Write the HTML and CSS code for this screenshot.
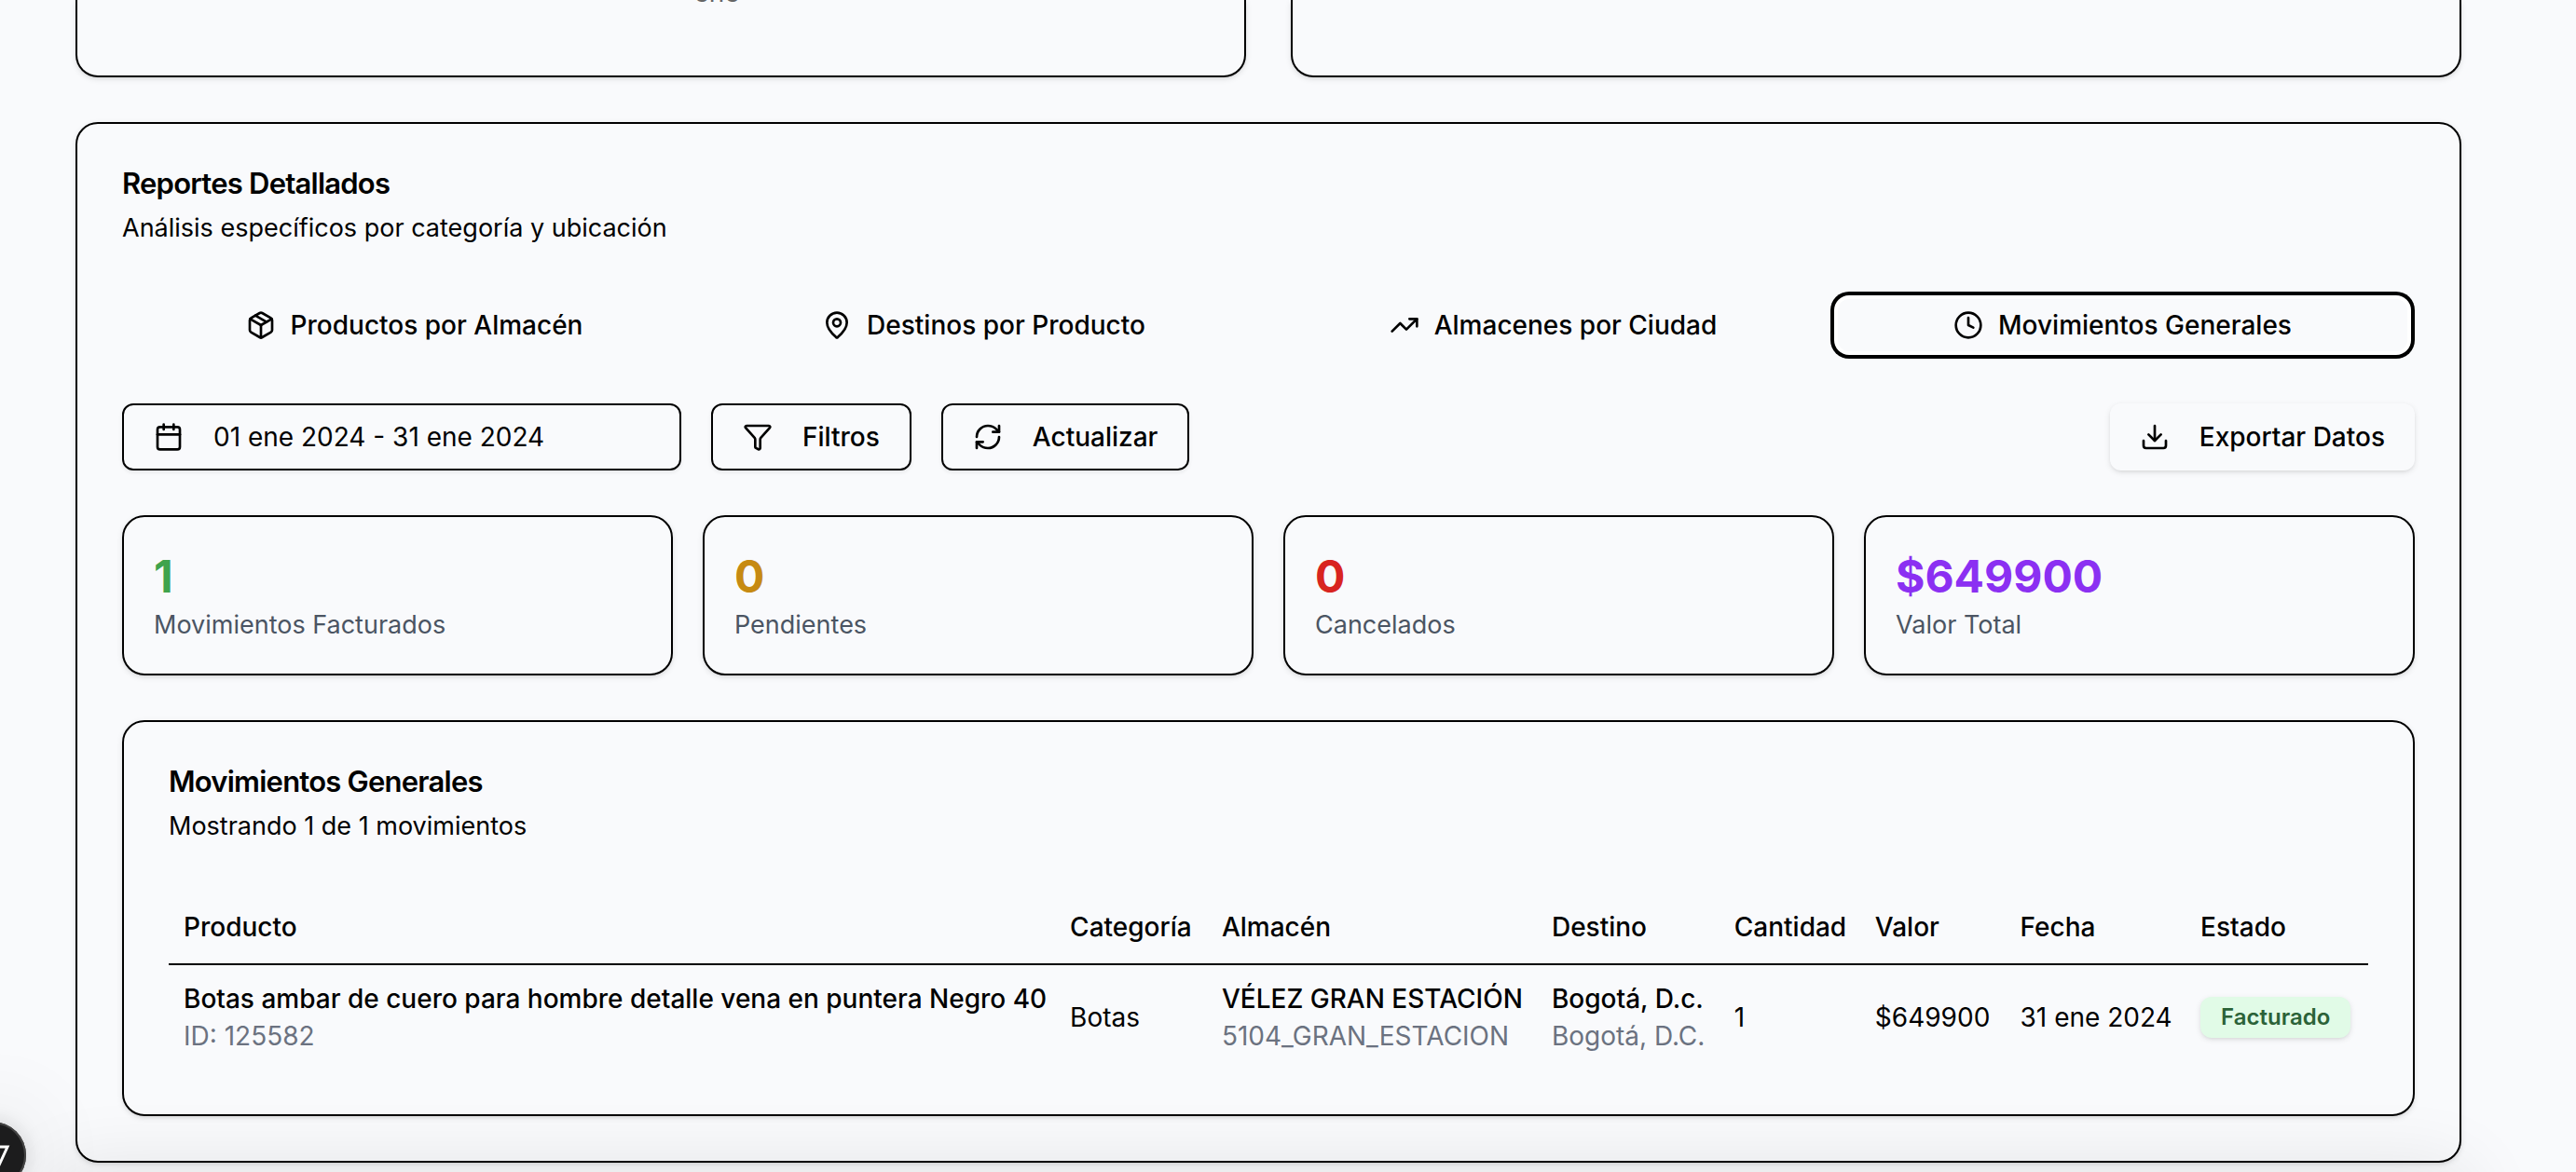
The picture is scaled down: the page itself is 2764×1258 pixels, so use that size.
FILE: index.html
```html
<!DOCTYPE html>
<html lang="es">
<head>
<meta charset="utf-8">
<meta name="viewport" content="width=device-width, initial-scale=1">
<title>Reportes Detallados</title>
<link rel="stylesheet" href="styles.css">
</head>
<body>
<main class="page">
  <div class="charts">
    <section class="card chart"><p class="chart-tick">ene</p></section>
    <section class="card chart"></section>
  </div>

  <section class="card panel">
    <header class="card-header">
      <h2 class="card-title">Reportes Detallados</h2>
      <p class="card-description">Análisis específicos por categoría y ubicación</p>
    </header>

    <div class="tabs" role="tablist">
      <button class="tab" role="tab" type="button">
        <svg class="icon" viewBox="0 0 24 24" aria-hidden="true"><path d="M11 21.73a2 2 0 0 0 2 0l7-4A2 2 0 0 0 21 16V8a2 2 0 0 0-1-1.73l-7-4a2 2 0 0 0-2 0l-7 4A2 2 0 0 0 3 8v8a2 2 0 0 0 1 1.73z"/><path d="M12 22V12"/><path d="m3.3 7 8.7 5 8.7-5"/><path d="m7.5 4.27 9 5.15"/></svg>
        Productos por Almacén
      </button>
      <button class="tab" role="tab" type="button">
        <svg class="icon" viewBox="0 0 24 24" aria-hidden="true"><path d="M20 10c0 4.993-5.539 10.193-7.399 11.799a1 1 0 0 1-1.202 0C9.539 20.193 4 14.993 4 10a8 8 0 0 1 16 0"/><circle cx="12" cy="10" r="3"/></svg>
        Destinos por Producto
      </button>
      <button class="tab" role="tab" type="button">
        <svg class="icon" viewBox="0 0 24 24" aria-hidden="true"><path d="M22 7 13.5 15.5 8.5 10.5 2 17"/><path d="M16 7h6v6"/></svg>
        Almacenes por Ciudad
      </button>
      <button class="tab tab-active" role="tab" type="button" aria-selected="true">
        <svg class="icon" viewBox="0 0 24 24" aria-hidden="true"><circle cx="12" cy="12" r="10"/><path d="M12 6v6l4 2"/></svg>
        Movimientos Generales
      </button>
    </div>

    <div class="toolbar">
      <button class="button button-date" type="button">
        <svg class="icon" viewBox="0 0 24 24" aria-hidden="true"><path d="M8 2v4"/><path d="M16 2v4"/><rect width="18" height="18" x="3" y="4" rx="2"/><path d="M3 10h18"/></svg>
        01 ene 2024 - 31 ene 2024
      </button>
      <button class="button" type="button">
        <svg class="icon" viewBox="0 0 24 24" aria-hidden="true"><path d="M10 20a1 1 0 0 0 .553.895l2 1A1 1 0 0 0 14 21v-7a2 2 0 0 1 .517-1.341L21.74 4.67A1 1 0 0 0 21 3H3a1 1 0 0 0-.742 1.67l7.225 7.989A2 2 0 0 1 10 14z"/></svg>
        Filtros
      </button>
      <button class="button" type="button">
        <svg class="icon" viewBox="0 0 24 24" aria-hidden="true"><path d="M3 12a9 9 0 0 1 9-9 9.75 9.75 0 0 1 6.74 2.74L21 8"/><path d="M21 3v5h-5"/><path d="M21 12a9 9 0 0 1-9 9 9.75 9.75 0 0 1-6.74-2.74L3 16"/><path d="M8 16H3v5"/></svg>
        Actualizar
      </button>
      <button class="button button-export" type="button">
        <svg class="icon" viewBox="0 0 24 24" aria-hidden="true"><path d="M12 15V3"/><path d="M21 15v4a2 2 0 0 1-2 2H5a2 2 0 0 1-2-2v-4"/><path d="m7 10 5 5 5-5"/></svg>
        Exportar Datos
      </button>
    </div>

    <div class="stats">
      <div class="card stat"><p class="stat-value green">1</p><p class="stat-label">Movimientos Facturados</p></div>
      <div class="card stat"><p class="stat-value amber">0</p><p class="stat-label">Pendientes</p></div>
      <div class="card stat"><p class="stat-value red">0</p><p class="stat-label">Cancelados</p></div>
      <div class="card stat"><p class="stat-value purple">$649900</p><p class="stat-label">Valor Total</p></div>
    </div>

    <section class="card panel">
      <header class="card-header">
        <h3 class="card-title">Movimientos Generales</h3>
        <p class="card-description">Mostrando 1 de 1 movimientos</p>
      </header>
      <table class="table">
        <colgroup>
          <col class="col-product"><col class="col-category"><col class="col-store"><col class="col-destination">
          <col class="col-quantity"><col class="col-value"><col class="col-date"><col class="col-status">
        </colgroup>
        <thead>
          <tr><th>Producto</th><th>Categoría</th><th>Almacén</th><th>Destino</th><th>Cantidad</th><th>Valor</th><th>Fecha</th><th>Estado</th></tr>
        </thead>
        <tbody>
          <tr>
            <td><div class="strong">Botas ambar de cuero para hombre detalle vena en puntera Negro 40</div><div class="muted">ID: 125582</div></td>
            <td>Botas</td>
            <td><div class="strong">VÉLEZ GRAN ESTACIÓN</div><div class="muted">5104_GRAN_ESTACION</div></td>
            <td><div class="strong">Bogotá, D.c.</div><div class="muted">Bogotá, D.C.</div></td>
            <td>1</td>
            <td>$649900</td>
            <td>31 ene 2024</td>
            <td><span class="badge">Facturado</span></td>
          </tr>
        </tbody>
      </table>
    </section>
  </section>
</main>

<div class="bottom-shade"></div>
<button class="dev-badge" type="button" aria-label="Herramientas">
  <svg class="dev-badge-mark" viewBox="0 0 72 72" aria-hidden="true"><path d="M20 52V27h32L41 51"/></svg>
</button>
</body>
</html>
```

FILE: styles.css
```css
* {
  box-sizing: border-box;
  margin: 0;
}

body {
  background: #f9fafc;
  color: #000;
  font: 400 28px/40px Inter, "Liberation Sans", sans-serif;
  overflow: hidden;
}

button {
  font: inherit;
  font-weight: 500;
  color: inherit;
  background: none;
  border: 0;
  white-space: nowrap;
}

.page {
  display: flex;
  flex-direction: column;
  gap: 48px;
  padding: 0 123px 48px 81px;
}

.card {
  border: 2px solid #000;
  border-radius: 24px;
  background: #f9fafc;
  box-shadow: 0 2px 6px rgb(0 0 0 / 10%), 0 2px 4px -2px rgb(0 0 0 / 10%);
}

.charts {
  display: grid;
  grid-template-columns: 1fr 1fr;
  gap: 48px;
}

.chart {
  height: 83px;
  border-top: 0;
  border-radius: 0 0 24px 24px;
  padding-left: 120px;
}

.chart-tick {
  margin-top: -22px;
  color: #666;
  line-height: 28px;
  text-align: center;
}

.panel {
  display: flex;
  flex-direction: column;
  gap: 48px;
  padding: 48px;
}

.card-header {
  display: flex;
  flex-direction: column;
  gap: 12px;
}

.card-title {
  font-size: 31px;
  font-weight: 600;
  line-height: 32px;
  letter-spacing: -0.025em;
}

.card-description {
  font-size: 27px;
}

.icon {
  width: 32px;
  height: 32px;
  flex: none;
  fill: none;
  stroke: currentColor;
  stroke-width: 2;
  stroke-linecap: round;
  stroke-linejoin: round;
}

.tabs {
  display: grid;
  grid-template-columns: repeat(4, 1fr);
  padding: 8px;
}

.tab {
  display: flex;
  align-items: center;
  justify-content: center;
  gap: 16px;
  padding: 8px 24px;
  border-radius: 12px;
}

.tab-active {
  background: #f9fafc;
  box-shadow: 0 0 0 4px #fff, 0 0 0 8px #000;
}

.toolbar {
  display: flex;
  gap: 32px;
}

.button {
  display: flex;
  align-items: center;
  gap: 32px;
  padding: 14px 32px;
  border: 2px solid #000;
  border-radius: 12px;
  box-shadow: 0 2px 4px rgb(0 0 0 / 8%);
}

.button-date {
  width: 600px;
  font-weight: 400;
}

.button-export {
  margin-left: auto;
  padding: 16px 32px;
  border: 0;
  box-shadow: 0 2px 6px rgb(0 0 0 / 10%), 0 2px 4px -2px rgb(0 0 0 / 10%);
}

.stats {
  display: grid;
  grid-template-columns: repeat(4, 1fr);
  gap: 32px;
}

.stat {
  padding: 32px;
}

.stat-value {
  font-size: 48px;
  font-weight: 700;
  line-height: 64px;
}

.stat-label {
  color: #4b5563;
  font-size: 27px;
}

.green { color: #40a34c; }
.amber { color: #c68a12; }
.red { color: #d82420; }
.purple { color: #8b30f2; }

.table {
  width: 100%;
  table-layout: fixed;
  border-collapse: separate;
  border-spacing: 0;
  text-align: left;
  white-space: nowrap;
}

.col-product { width: 40.3%; }
.col-category { width: 6.9%; }
.col-store { width: 15%; }
.col-destination { width: 8.3%; }
.col-quantity { width: 6.4%; }
.col-value { width: 6.6%; }
.col-date { width: 8.2%; }
.col-status { width: 8.3%; }

.table th {
  height: 81px;
  padding: 0 16px;
  border-bottom: 2px solid #000;
  font-weight: 500;
}

.table td {
  padding: 16px;
  vertical-align: middle;
}

.strong {
  font-weight: 500;
}

.muted {
  color: #6b7280;
}

.badge {
  display: inline-block;
  padding: 6px 22px;
  border-radius: 12px;
  background: #e1fbe7;
  color: #2b6238;
  font-size: 24px;
  font-weight: 600;
  line-height: 32px;
  vertical-align: middle;
  box-shadow: 0 2px 6px rgb(0 0 0 / 10%), 0 2px 4px -2px rgb(0 0 0 / 10%);
}

.bottom-shade {
  position: fixed;
  top: 100%;
  left: 60px;
  right: 120px;
  height: 100px;
  box-shadow: 0 0 84px rgb(0 0 0 / 11%);
  pointer-events: none;
}

.dev-badge {
  position: fixed;
  left: -44px;
  bottom: -18px;
  width: 72px;
  height: 72px;
  padding: 0;
  border-radius: 50%;
  background: #1c1c1d;
  box-shadow: inset 0 0 0 2px #444, 0 0 24px rgb(0 0 0 / 14%), 0 0 100px rgb(0 0 0 / 14%);
}

.dev-badge-mark {
  display: block;
  width: 72px;
  height: 72px;
  fill: none;
  stroke: #fff;
  stroke-width: 3;
}
```
